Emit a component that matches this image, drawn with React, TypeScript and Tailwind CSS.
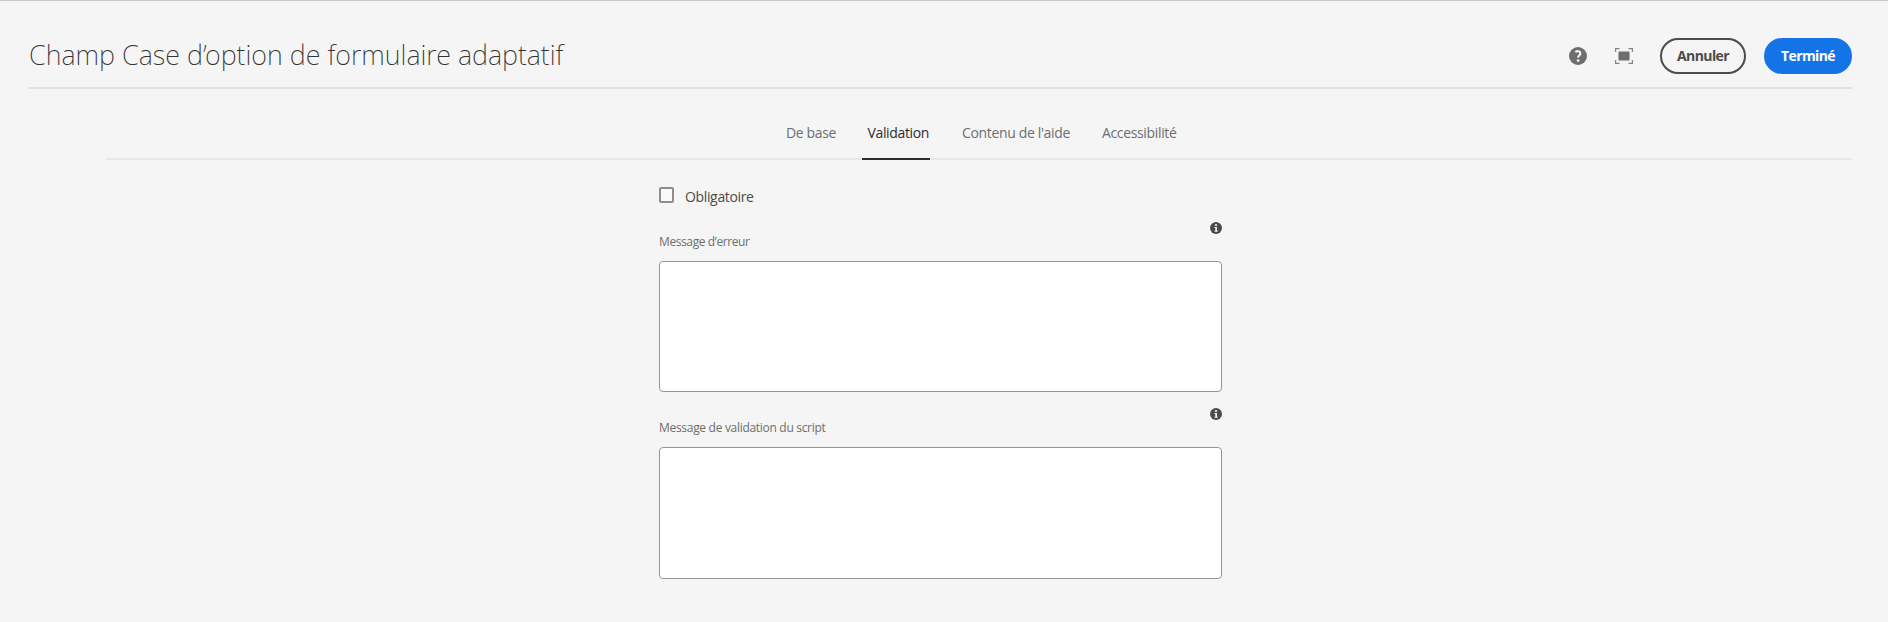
import React from 'react';

const tabs = [
  { label: 'De base', style: 'ml-[786px] w-[50px] text-[#6e6e6e]' },
  { label: 'Validation', style: 'ml-[26px] w-[68px] pl-[5.5px] text-[#2c2c2c] border-b-2 border-[#2c2c2c]' },
  { label: "Contenu de l'aide", style: 'ml-[32px] w-[108px] text-[#6e6e6e]' },
  { label: 'Accessibilité', style: 'ml-[32px] w-[77px] text-[#6e6e6e]' },
];

function HelpIcon() {
  return (
    <svg width="18" height="18" viewBox="0 0 18 18">
      <circle cx="9" cy="9" r="9" fill="#6e6e6e" />
      <path d="M6.3 4.9C8.4 3.7 11.4 3.9 11.4 6.3c0 2.1-2.5 2.2-2.3 4.4" fill="none" stroke="#f5f5f5" strokeWidth="2.1" />
      <circle cx="9.1" cy="13.6" r="1.4" fill="#f5f5f5" />
    </svg>
  );
}

function FullScreenIcon() {
  return (
    <svg width="18" height="16" viewBox="0 0 18 16">
      <rect x="3.5" y="3.5" width="11" height="9" fill="#6e6e6e" />
      <path d="M.6 4V.6H4.5M13.5 .6h3.9V4M17.4 12v3.4h-3.9M4.5 15.4H.6V12" fill="none" stroke="#858585" strokeWidth="1.2" />
    </svg>
  );
}

function InfoIcon() {
  return (
    <svg className="mr-[0.5px]" width="12" height="12" viewBox="0 0 12 12">
      <circle cx="6" cy="6" r="6" fill="#4b4b4b" />
      <circle cx="6" cy="3" r="1.1" fill="#f5f5f5" />
      <path d="M4.5 5H7v3.7h.8v1H4.5v-1h.8V6h-.8z" fill="#f5f5f5" />
    </svg>
  );
}

function Field({ label, tracking, height }: { label: string; tracking: string; height: string }) {
  return (
    <div className="w-[563px]">
      <div className="flex h-[39px] justify-between">
        <label className={`mt-[11px] text-[12px] leading-[18px] whitespace-nowrap text-[#6e6e6e] ${tracking}`}>{label}</label>
        <InfoIcon />
      </div>
      <textarea className={`block w-full resize-none rounded-[4px] border border-[#959595] bg-white outline-none ${height}`} />
    </div>
  );
}

export default function App() {
  return (
    <div className="h-[622px] w-full overflow-hidden border-t border-[#cacaca] bg-[#f5f5f5] font-['Open_Sans','Noto_Sans',sans-serif]">
      <header className="ml-[29px] mr-9 flex h-[88px] items-start justify-between border-b-2 border-[#e1e1e1]">
        <h1 className="mt-[33px] origin-left scale-x-[0.965] whitespace-nowrap font-['Noto_Sans','Open_Sans',sans-serif] text-[28px] font-extralight leading-[40px] text-[#323232]">
          Champ Case d’option de formulaire adaptatif
        </h1>
        <div className="mt-[37px] flex h-9 items-center">
          <HelpIcon />
          <span className="ml-7 flex"><FullScreenIcon /></span>
          <button className="ml-[27px] h-9 w-[86px] rounded-full border-2 border-[#4b4b4b] pb-[2px] text-[14px] font-bold tracking-[-0.6px] text-[#4b4b4b]">Annuler</button>
          <button className="ml-[18px] h-9 w-[88px] rounded-full bg-[#1473e6] pb-[2px] text-[14px] font-bold tracking-[-0.6px] text-white">Terminé</button>
        </div>
      </header>
      <nav className="mr-9 ml-[106px] flex h-[71px] border-b-2 border-[#e8e8e8]">
        <div className="-ml-[106px] flex h-[71px] pt-[33px]">
          {tabs.map((t) => (
            <a key={t.label} className={`block h-[38px] shrink-0 whitespace-nowrap text-[14px] leading-[22px] tracking-[-0.35px] ${t.style}`}>{t.label}</a>
          ))}
        </div>
      </nav>
      <main className="ml-[659px] pt-[27px]">
        <label className="flex h-4 items-center">
          <span className="h-4 w-[15px] rounded-[2px] border-2 border-[#8e8e8e] bg-[#fafafa]" />
          <span className="mt-[2px] ml-[11px] text-[14px] tracking-[-0.35px] text-[#4b4b4b]">Obligatoire</span>
        </label>
        <div className="mt-[19px] flex flex-col gap-[16px]">
          <Field label="Message d’erreur" tracking="tracking-[-0.4px]" height="h-[131px]" />
          <Field label="Message de validation du script" tracking="tracking-[-0.3px]" height="h-[132px]" />
        </div>
      </main>
    </div>
  );
}
